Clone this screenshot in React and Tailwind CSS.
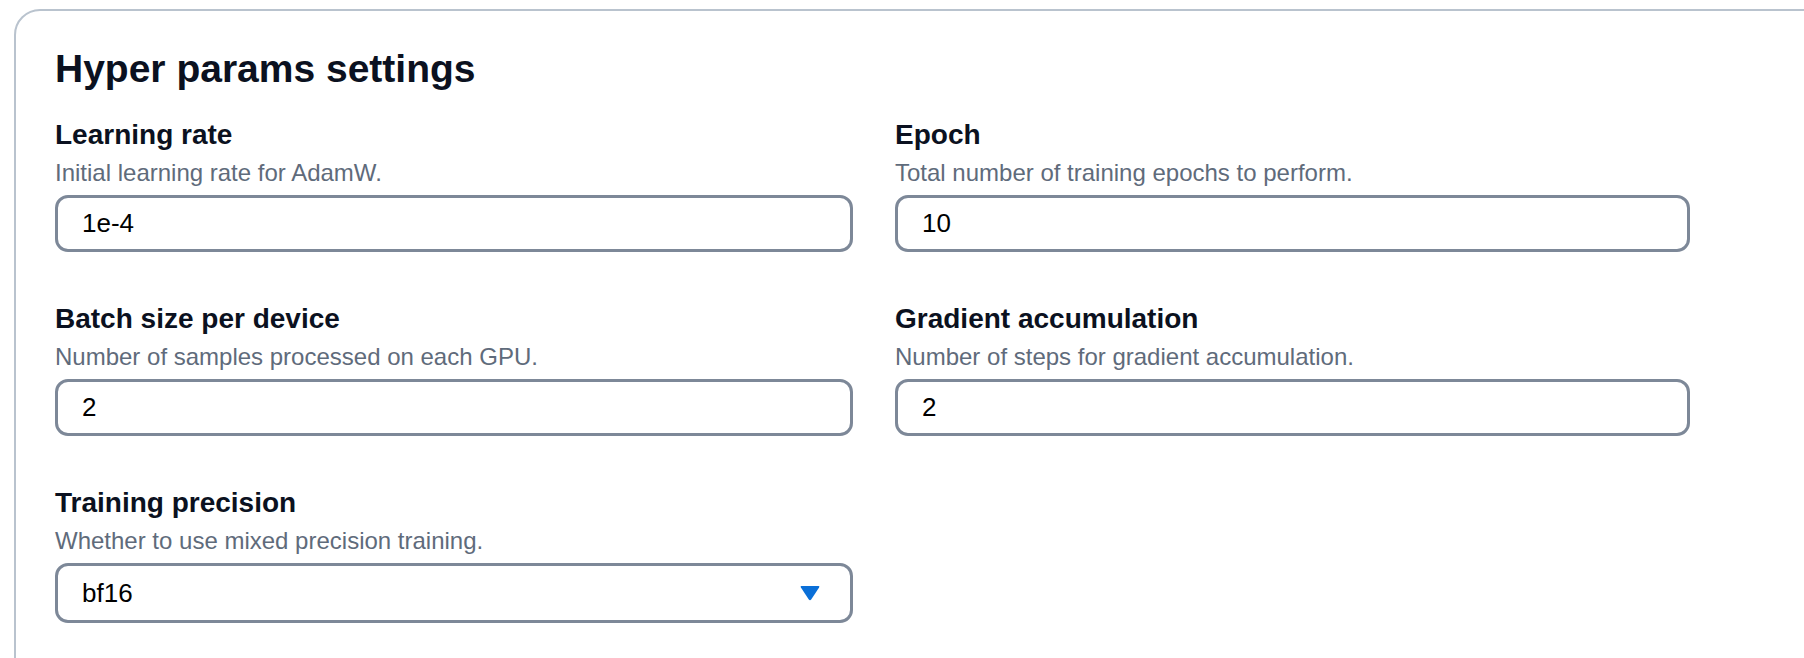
import React from "react";

const fields = [
  { label: "Learning rate", hint: "Initial learning rate for AdamW.", value: "1e-4" },
  { label: "Epoch", hint: "Total number of training epochs to perform.", value: "10" },
  { label: "Batch size per device", hint: "Number of samples processed on each GPU.", value: "2" },
  { label: "Gradient accumulation", hint: "Number of steps for gradient accumulation.", value: "2" },
];

const Field = ({ label, hint, children }) => (
  <div className="flex flex-col">
    <label className="text-[28px] leading-[34px] font-bold text-[#0b1120] mb-[5px]">{label}</label>
    <p className="text-[24px] leading-[32px] text-[#5f6b7b] mb-[6px]">{hint}</p>
    {children}
  </div>
);

const App = () => {
  return (
    <div
      className="w-[1804px] h-[658px] overflow-hidden bg-white pl-[14px] pt-[9px]"
      style={{ fontFamily: '"Liberation Sans", Arial, sans-serif' }}
    >
      <div className="w-[1860px] h-[720px] border-2 border-[#b9c3ce] rounded-[26px] pl-[39px] pt-[35px]">
        <h1 className="text-[39px] leading-[46px] font-bold text-[#0b1120] mb-[26px]">Hyper params settings</h1>

        <div className="grid grid-cols-[798px_795px] gap-x-[42px] gap-y-[50px]">
          {fields.map((f) => (
            <Field key={f.label} label={f.label} hint={f.hint}>
              <input
                type="text"
                defaultValue={f.value}
                className="h-[57px] w-full border-[3px] border-[#7d8898] rounded-[13px] pl-[24px] text-[26px] text-black outline-none bg-white"
              />
            </Field>
          ))}

          {/* Precision select */}
          <Field label="Training precision" hint="Whether to use mixed precision training.">
            <div className="h-[60px] w-full border-[3px] border-[#7d8898] rounded-[13px] pl-[24px] pr-[30px] flex items-center justify-between">
              <span className="text-[26px] text-black">bf16</span>
              <svg width="20" height="16" viewBox="0 0 20 16">
                <path d="M1.5 1 H18.5 Q20 1 19.1 2.4 L11.2 14.6 Q10 16 8.8 14.6 L0.9 2.4 Q0 1 1.5 1 Z" fill="#0a6fd8" />
              </svg>
            </div>
          </Field>
        </div>
      </div>
    </div>
  );
};

export default App;
